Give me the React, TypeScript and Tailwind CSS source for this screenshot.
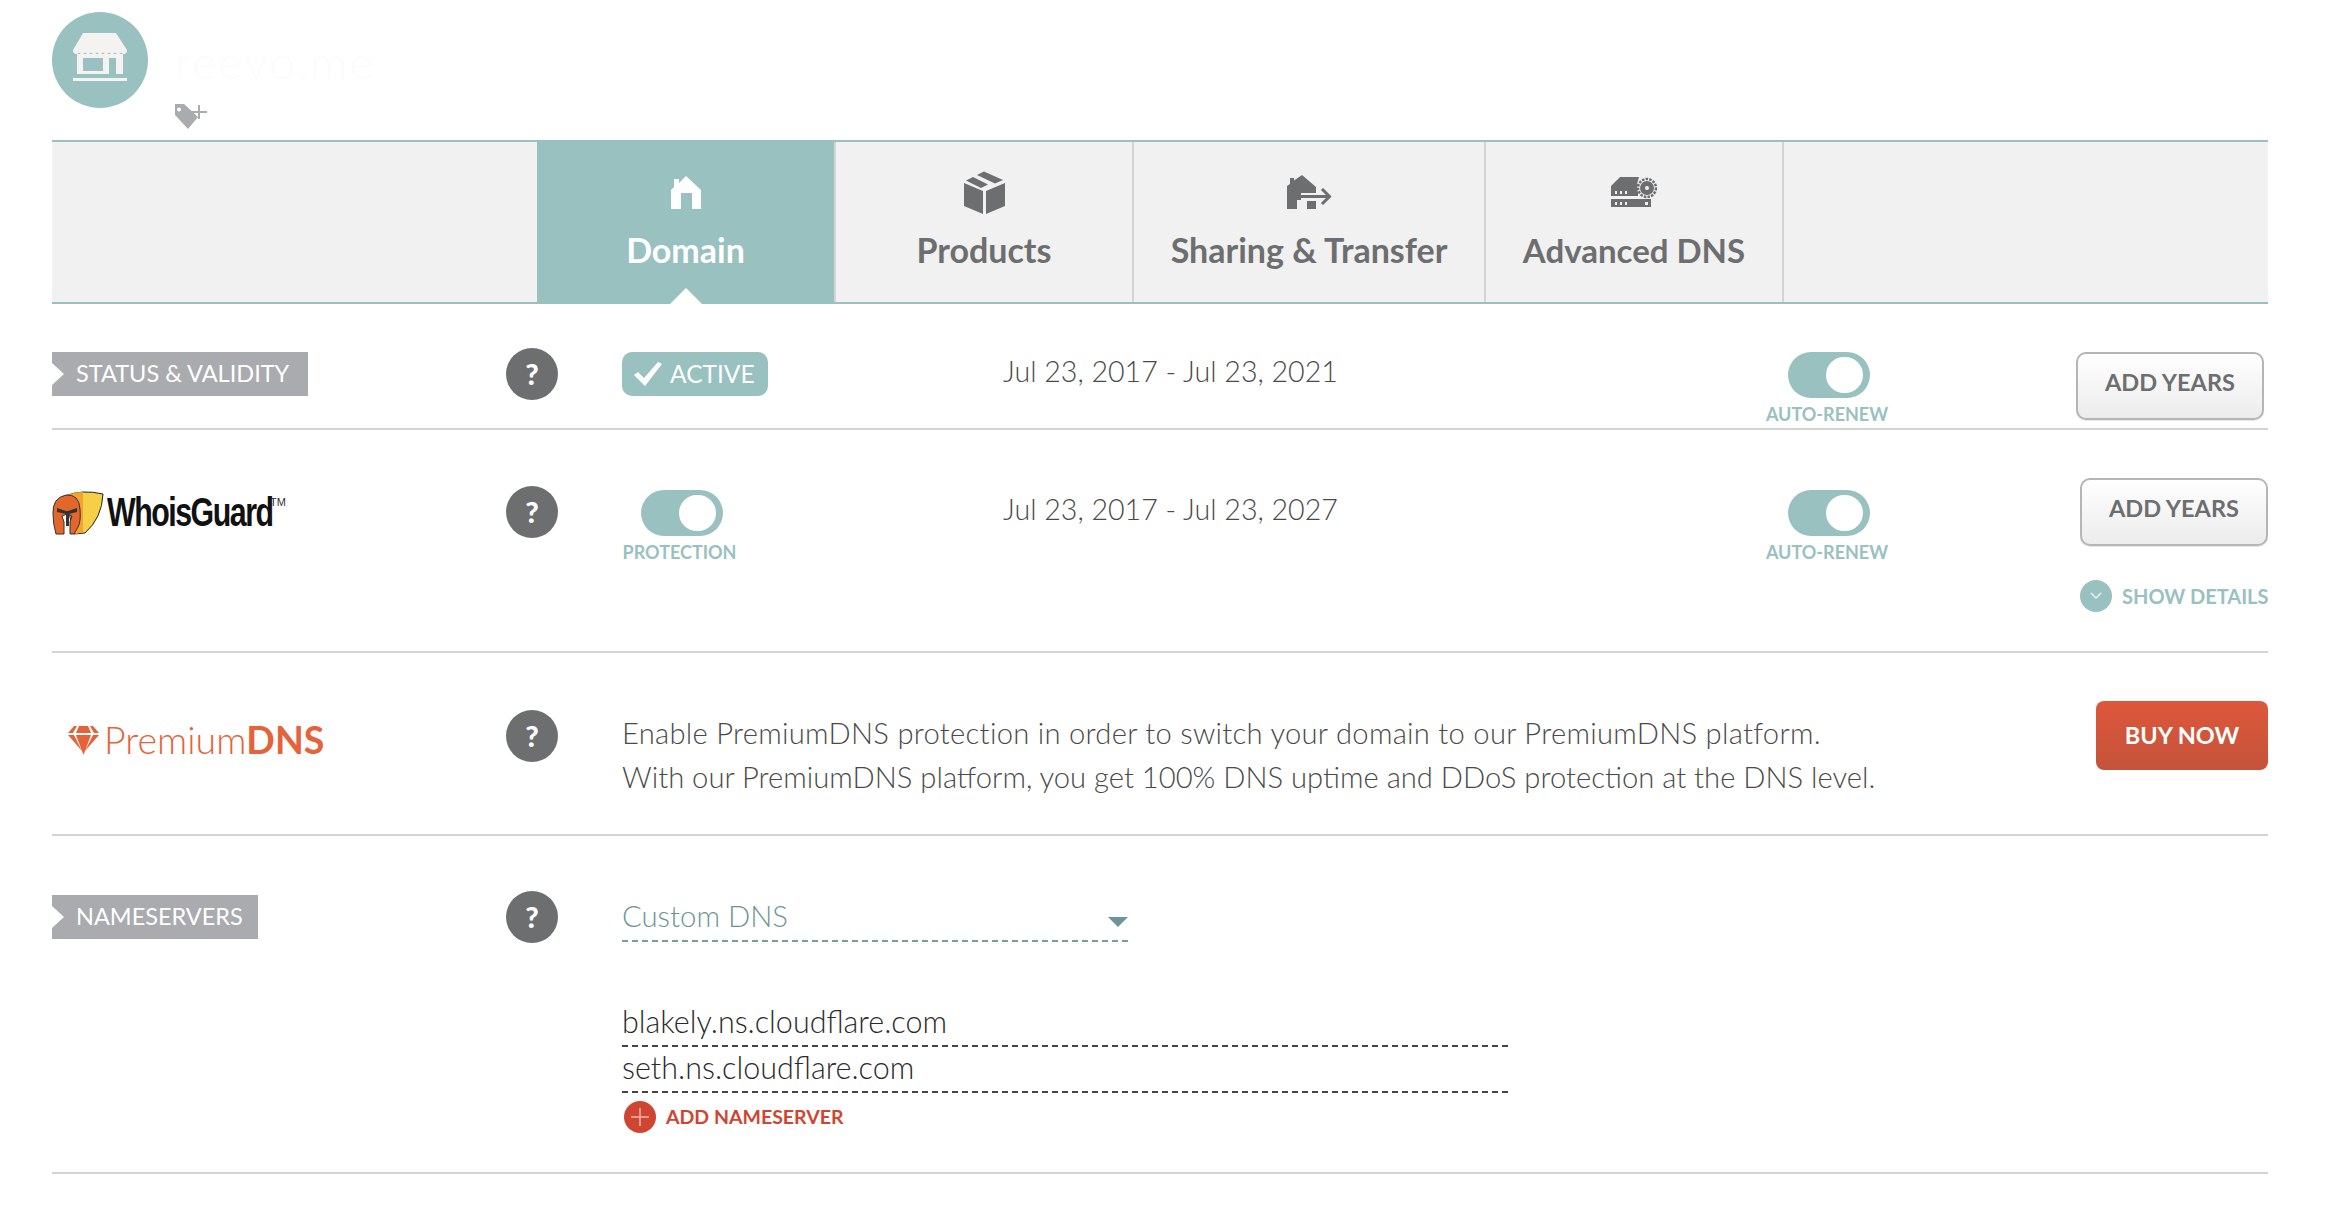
import React from "react";

const Help = ({ className = "" }: { className?: string }) => (
  <div className={`w-[52px] h-[52px] shrink-0 rounded-full bg-[#6d6e70] flex items-center justify-center text-white font-black text-[29px] ${className}`}>?</div>
);

const Tag = ({ children, width }: { children: React.ReactNode; width: string }) => (
  <div className={`h-[44px] ${width} mt-1 bg-[#a9abae] text-white text-[23.500px] pl-6 flex items-center whitespace-nowrap [clip-path:polygon(0_0,100%_0,100%_100%,0_100%,0_33px,12px_22px,0_11px)]`}>
    {children}
  </div>
);

const Toggle = ({ label, width, shift }: { label: string; width: string; shift: string }) => (
  <div className={`${width} flex flex-col items-center shrink-0`}>
    <div className={`w-[82px] h-[46px] ${shift} rounded-full bg-[#99c1c0] flex items-center justify-end pr-[7px]`}>
      <div className="w-[37px] h-[36px] rounded-full bg-white" />
    </div>
    <div className="mt-[4px] text-[18px] leading-[24px] font-bold text-[#99c1c0] whitespace-nowrap">{label}</div>
  </div>
);

const AddYears = () => (
  <div className="w-[188px] h-[68px] rounded-[10px] border-2 border-[#b5b5b5] bg-gradient-to-b from-white to-[#ececec] flex items-center justify-center pb-[6px] text-[23.5px] font-bold text-[#6d6e70] shadow-[0_1px_1px_rgba(0,0,0,0.1)]">
    ADD YEARS
  </div>
);

const Store = () => (
  <svg width="96" height="96" viewBox="0 0 96 96" fill="#f4f3f1">
    <path d="M31 21H64L75 38H21Z" />
    <path d="M21 38H75V40Q72 44 69 40.5Q66 44 63 40.5Q60 44 57 40.5Q54 44 51 40.5Q48 44 45 40.5Q42 44 39 40.5Q36 44 33 40.5Q30 44 27 40.5Q24 44 21 40Z" />
    <path fillRule="evenodd" d="M25 42H71V62H25ZM31 46V59H51V46ZM57 46V62H64V46Z" />
    <rect x="21" y="66" width="54" height="3" />
  </svg>
);

const HomeIcon = () => (
  <svg width="30" height="33" viewBox="0 0 30 33" fill="#ffffff">
    <path d="M15 0L30 14V33H21V17H10V33H0V14L3 11V3H8V7Z" />
  </svg>
);

const BoxIcon = () => (
  <svg width="41" height="43" viewBox="0 0 41 43" fill="#6d6e70">
    <path d="M0 12L19 20V43L0 35Z" />
    <path d="M22 20L41 12V35L22 43Z" />
    <path d="M2 9.500L9 6L24 13.500L17 17Z" />
    <path d="M13 4L20 0.500L39 9L31 12.500Z" />
  </svg>
);

const ShareIcon = () => (
  <svg width="45" height="34" viewBox="0 0 45 34" fill="#6d6e70">
    <path d="M15 0L29 12V18H14V25H10V34H0V11L3 9V3H7V5.500Z" />
    <rect x="20" y="26" width="9" height="8" />
    <path d="M14 21.500H42M35 14L42.500 21.500L35 29" fill="none" stroke="#6d6e70" strokeWidth="3" />
  </svg>
);

const ServerIcon = () => (
  <svg width="46" height="30" viewBox="0 0 46 30" fill="#6d6e70">
    <path d="M9 0H28L26 7H27V19H0V9Z" />
    <rect x="0" y="22" width="40" height="8" />
    <g fill="#f1f1f1">
      <rect x="4" y="14" width="2" height="3" /><rect x="9" y="14" width="2" height="3" /><rect x="14" y="14" width="2" height="3" />
      <rect x="4" y="25" width="2" height="3" /><rect x="9" y="25" width="2" height="3" /><rect x="14" y="25" width="2" height="3" />
      <rect x="34" y="25" width="3" height="3" />
    </g>
    <circle cx="36" cy="11" r="10" fill="#f1f1f1" />
    <circle cx="36" cy="11" r="9" fill="none" stroke="#6d6e70" strokeWidth="2.500" strokeDasharray="2.500 1.200" />
    <circle cx="36" cy="11" r="7" />
    <circle cx="36" cy="11" r="2" fill="#f1f1f1" />
  </svg>
);

const Tab = ({ icon, label, width, active, size }: { icon: React.ReactNode; label: string; width: string; active?: boolean; size: string }) => (
  <div className={`${width} relative shrink-0 flex flex-col items-center border-r-2 pt-[28px] ${active ? "bg-[#99c1c0] border-[#d4d4d4] text-white" : "border-[#d4d4d4] text-[#6d6e70]"}`}>
    <div className="h-[44px] flex items-center">{icon}</div>
    <div className={`mt-[16px] ${size} leading-[40px] font-bold whitespace-nowrap`}>{label}</div>
    {active && (
      <div className="absolute bottom-[-2px] left-1/2 -translate-x-1/2 w-0 h-0 border-x-[16px] border-x-transparent border-b-[16px] border-b-white" />
    )}
  </div>
);

const WhoisLogo = () => (
  <div className="w-[454px] flex items-start mt-3 shrink-0">
    <svg width="54" height="45" viewBox="0 0 54 45" className="shrink-0">
      <path d="M13 6Q30 -1 51 4Q50 28 33 43L22 44Z" fill="#f5cf45" stroke="#222" strokeWidth="1" />
      <path d="M13 6Q22 2 31 2V42L24 44Z" fill="#f4a32e" />
      <path d="M1 24Q0 8 14 5Q27 4 28 19Q29 32 26 37L22 44H18V32L20 26L15 24L10 26L12 32V44H4Q1 34 1 24Z" fill="#e3672b" stroke="#333" strokeWidth="1" />
      <path d="M5 18L14 21H16L25 18V22L17 24V36H14V24L5 22Z" fill="#333" />
    </svg>
    <div className="flex items-start ml-[1px] w-[180px]">
      <span className="font-['Liberation_Sans',sans-serif] font-bold text-[41px] leading-[44px] tracking-[-2px] text-[#111] origin-left scale-x-[0.74] inline-block whitespace-nowrap w-[163px]">WhoisGuard</span>
      <span className="font-['Liberation_Sans',sans-serif] text-[11px] leading-[12px] mt-[6px] text-[#333]">TM</span>
    </div>
  </div>
);

const PremiumLogo = () => (
  <div className="w-[454px] pl-4 mt-5 flex items-center shrink-0 text-[#e4633a]">
    <svg width="31" height="30" viewBox="0 0 31 30" fill="#e4633a" className="shrink-0">
      <path d="M0 8L6 1H9L5 8ZM11 1H20L23 8H8ZM22 1H25L31 8H26Z" />
      <path d="M0 10H6L14 26ZM8 10H23L15.500 30ZM25 10H31L17 26Z" />
    </svg>
    <span className="ml-[5px] text-[37.500px] leading-[37px] font-light whitespace-nowrap">Premium<span className="font-bold">DNS</span></span>
  </div>
);

export default function App() {
  return (
    <div className="w-full h-[1206px] overflow-hidden bg-white pl-[52px] pr-[66px] font-['Lato',sans-serif]">
      <div className="h-[140px] pt-3 flex">
        <div className="w-24 h-24 rounded-full bg-[#99c1c0] shrink-0"><Store /></div>
        <div className="ml-[27px] pt-[30px] flex flex-col">
          <div className="text-[46px] leading-[40px] font-light text-[#fcfcfc] tracking-wider">reevo.me</div>
          <svg width="33" height="26" viewBox="0 0 33 26" fill="#a9abae" className="mt-[22px]">
            <path fillRule="evenodd" d="M0 0H9L23 13L13 25L0 11ZM4 3.500A2 2 0 1 0 4 7.500A2 2 0 1 0 4 3.500Z" />
            <path d="M24 1V15M17 8H32" fill="none" stroke="#a9abae" strokeWidth="2" />
          </svg>
        </div>
      </div>

      <div className="h-[164px] border-y-2 border-[#99c1c0] bg-[#f1f1f1] flex">
        <div className="w-[485px] shrink-0" />
        <Tab icon={<HomeIcon />} label="Domain" width="w-[299px]" size="text-[34px]" active />
        <Tab icon={<BoxIcon />} label="Products" width="w-[298px]" size="text-[34px]" />
        <Tab icon={<ShareIcon />} label="Sharing & Transfer" width="w-[352px]" size="text-[34px]" />
        <Tab icon={<ServerIcon />} label="Advanced DNS" width="w-[298px]" size="text-[33px]" />
      </div>

      <div className="h-[126px] pt-[44px] border-b-2 border-[#d4d4d4] flex items-start">
        <div className="w-[454px] shrink-0"><Tag width="w-[256px]">STATUS &amp; VALIDITY</Tag></div>
        <Help />
        <div className="ml-16 mt-1 w-[381px] shrink-0">
          <div className="w-[146px] h-[44px] rounded-[10px] bg-[#99c1c0] flex items-center pl-3 gap-2 text-white text-[24.500px]">
            <svg width="28" height="24" viewBox="0 0 28 24" fill="#ffffff" className="shrink-0"><path d="M0 13L4 10L10 16L24 0L28 2L11 24Z" /></svg>
            ACTIVE
          </div>
        </div>
        <div className="mt-[4px] w-[763px] shrink-0 text-[28.600px] leading-[38px] font-light text-[#4a4a4a]">Jul 23, 2017 - Jul 23, 2021</div>
        <div className="mt-1"><Toggle label="AUTO-RENEW" width="w-[122px]" shift="ml-[3px]" /></div>
        <div className="flex-1 flex justify-end pr-1 mt-1"><AddYears /></div>
      </div>

      <div className="h-[223px] pt-[48px] border-b-2 border-[#d4d4d4] flex items-start">
        <WhoisLogo />
        <Help className="mt-[8px]" />
        <div className="ml-16 mt-3 w-[381px] shrink-0 flex"><Toggle label="PROTECTION" width="w-[115px]" shift="ml-[4px]" /></div>
        <div className="mt-[12px] w-[763px] shrink-0 text-[28.600px] leading-[38px] font-light text-[#4a4a4a]">Jul 23, 2017 - Jul 23, 2027</div>
        <div className="mt-3"><Toggle label="AUTO-RENEW" width="w-[122px]" shift="ml-[3px]" /></div>
        <div className="flex-1 flex flex-col items-end">
          <AddYears />
          <div className="mt-[34px] w-[188px] flex items-center gap-[10px]">
            <div className="w-8 h-8 rounded-full bg-[#99c1c0] flex items-center justify-center shrink-0">
              <svg width="12" height="8" viewBox="0 0 12 8" fill="none" stroke="#e8f1f1" strokeWidth="1.500"><path d="M1 1L6 6L11 1" /></svg>
            </div>
            <span className="text-[20px] leading-[24px] font-bold text-[#99c1c0] whitespace-nowrap">SHOW DETAILS</span>
          </div>
        </div>
      </div>

      <div className="h-[183px] pt-[48px] border-b-2 border-[#d4d4d4] flex items-start">
        <PremiumLogo />
        <Help className="mt-[9px]" />
        <div className="ml-16 mt-[10px] w-[1400px] shrink-0 text-[29.200px] leading-[44px] font-light text-[#4a4a4a]">
          <p className="whitespace-nowrap tracking-[0.27px]">Enable PremiumDNS protection in order to switch your domain to our PremiumDNS platform.</p>
          <p className="whitespace-nowrap">With our PremiumDNS platform, you get 100% DNS uptime and DDoS protection at the DNS level.</p>
        </div>
        <div className="flex-1 flex justify-end">
          <div className="w-[172px] h-[69px] shrink-0 rounded-[8px] bg-gradient-to-b from-[#de573b] to-[#c4533a] flex items-center justify-center text-white text-[23.500px] font-bold">BUY NOW</div>
        </div>
      </div>

      <div className="h-[338px] pt-[55px] border-b-2 border-[#d4d4d4] flex items-start">
        <div className="w-[454px] shrink-0"><Tag width="w-[206px]">NAMESERVERS</Tag></div>
        <Help />
        <div className="ml-16 flex-1">
          <div className="w-[506px] h-[51px] border-b-2 border-dashed border-[#7b9c9c] flex items-center justify-between text-[29.300px] font-light text-[#6f9495]">
            Custom DNS
            <span className="w-0 h-0 mt-3 border-x-[10px] border-x-transparent border-t-[10px] border-t-[#6f9495]" />
          </div>
          <div className="w-[886px] mt-[59px]">
            <div className="h-[46px] border-b-2 border-dashed border-[#444] text-[30.500px] leading-[40px] font-light text-[#2b2b2b]">blakely.ns.cloudflare.com</div>
            <div className="h-[46px] border-b-2 border-dashed border-[#444] text-[30.500px] leading-[40px] font-light text-[#2b2b2b]">seth.ns.cloudflare.com</div>
          </div>
          <div className="mt-[8px] pl-[2px] flex items-center gap-[10px]">
            <div className="w-8 h-8 rounded-full bg-[#cf4531] flex items-center justify-center shrink-0">
              <svg width="20" height="20" viewBox="0 0 20 20" stroke="#eeb5aa" strokeWidth="1.500"><path d="M10 1V19M1 10H19" /></svg>
            </div>
            <span className="text-[19.500px] leading-[24px] font-bold text-[#cf4531] whitespace-nowrap">ADD NAMESERVER</span>
          </div>
        </div>
      </div>
    </div>
  );
}
